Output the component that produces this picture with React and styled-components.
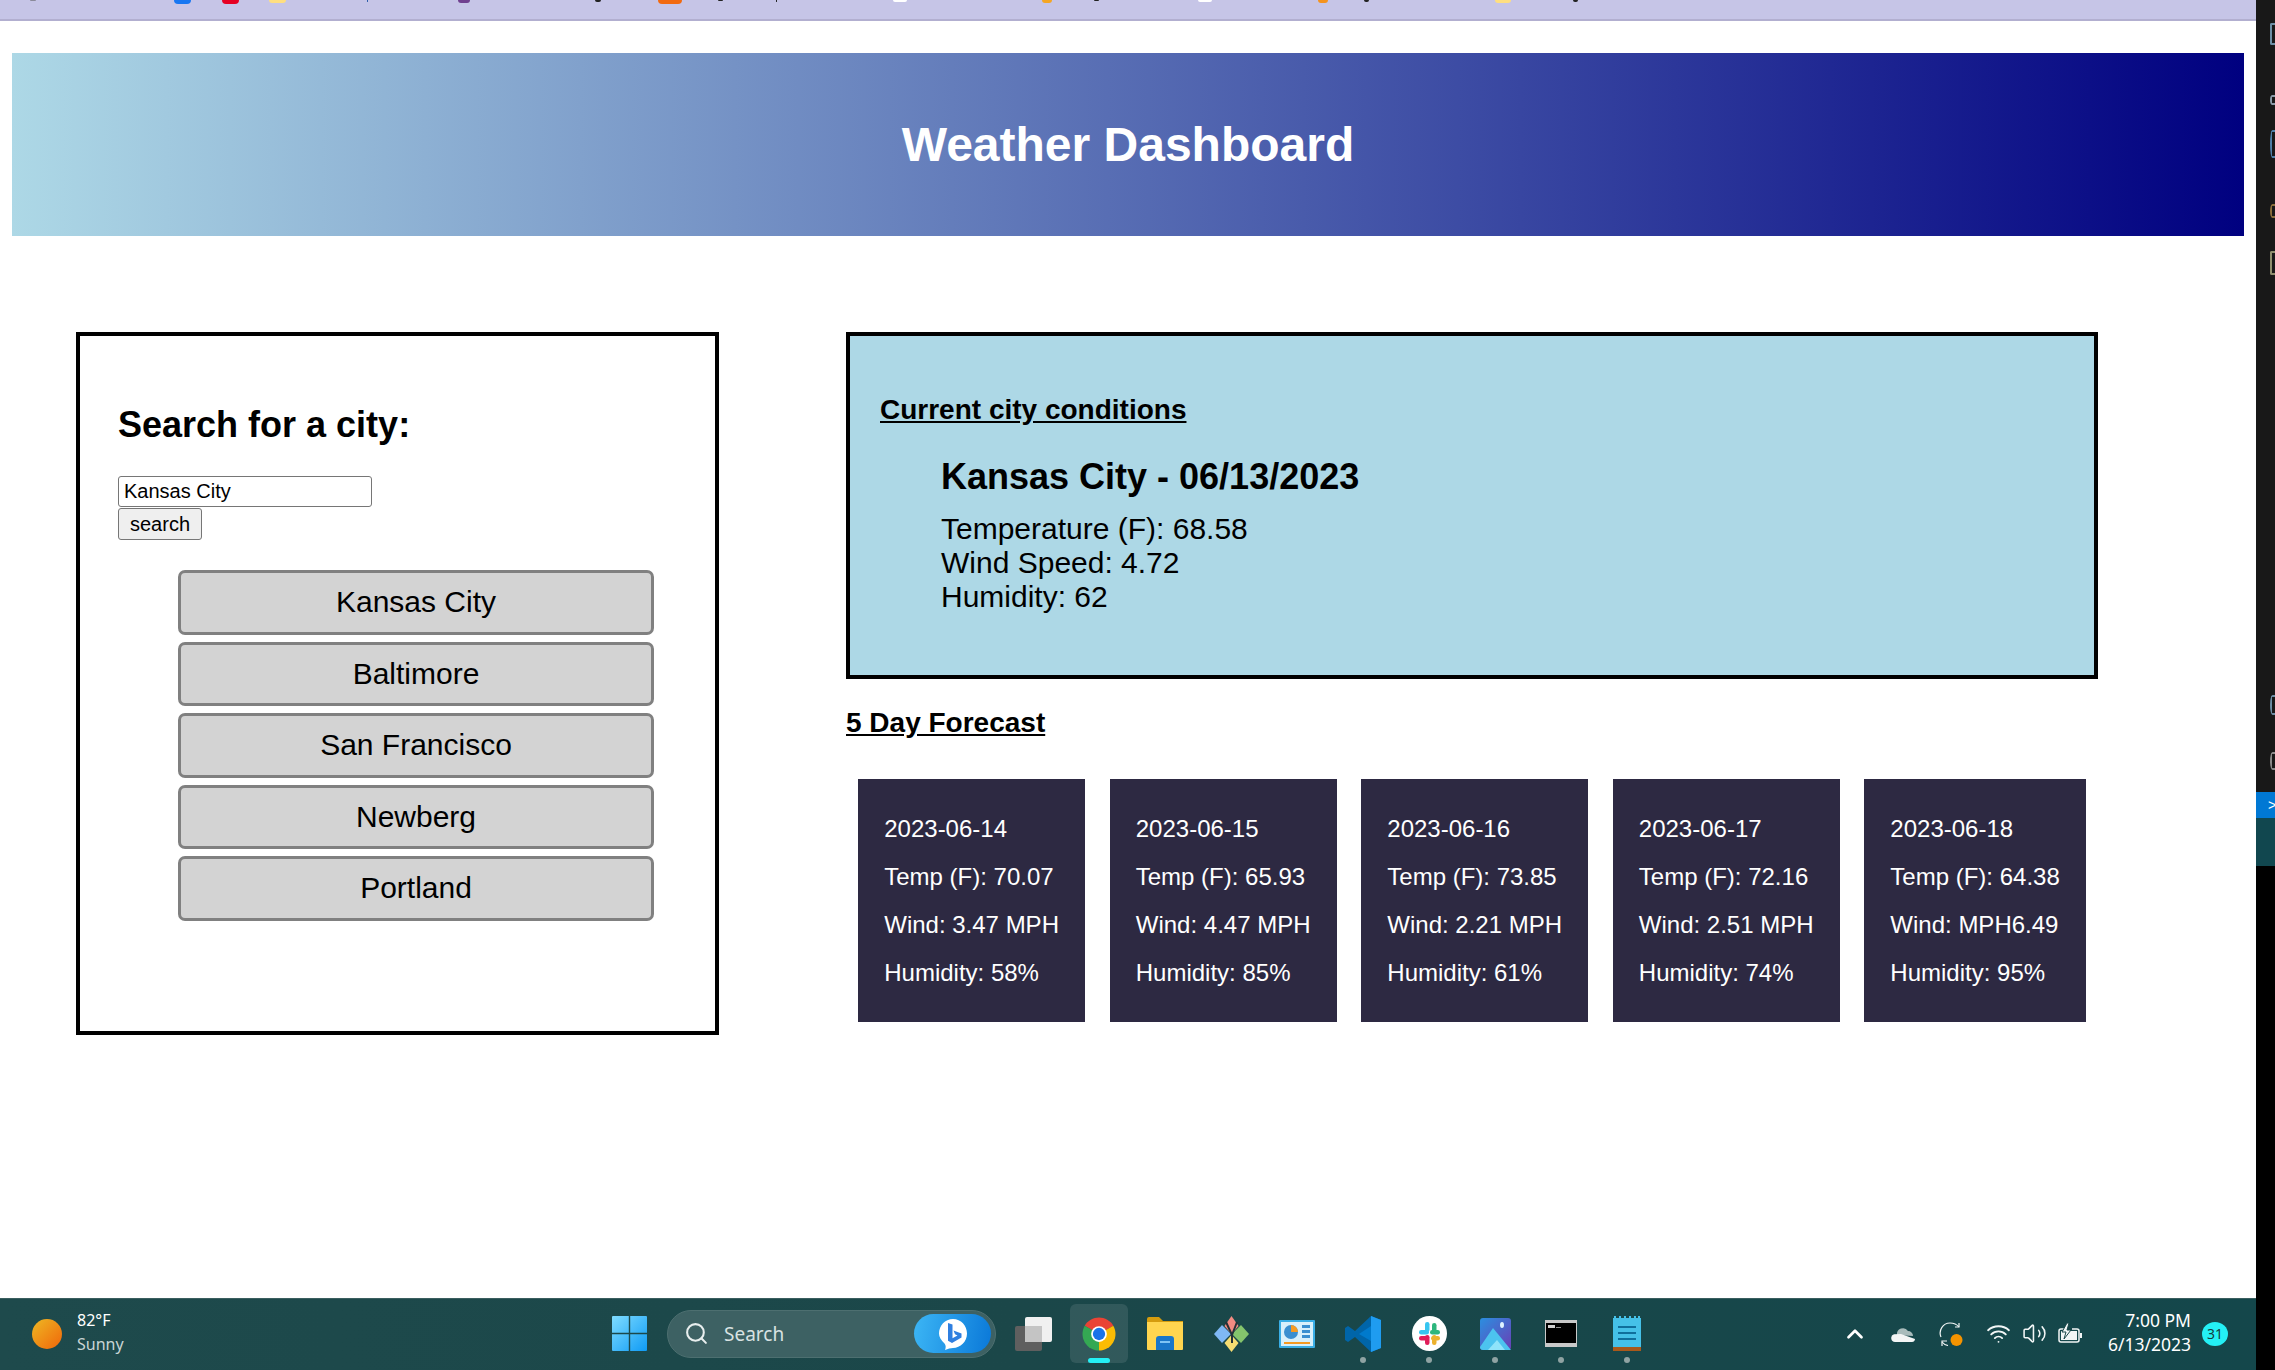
import styled, { createGlobalStyle } from "styled-components"
import { Search, ChevronUp, Wifi, Volume2 } from "lucide-react"

const cities = ["Kansas City", "Baltimore", "San Francisco", "Newberg", "Portland"]

const forecast = [
    { date: "2023-06-14", temp: "70.07", wind: "3.47 MPH", humidity: "58%" },
    { date: "2023-06-15", temp: "65.93", wind: "4.47 MPH", humidity: "85%" },
    { date: "2023-06-16", temp: "73.85", wind: "2.21 MPH", humidity: "61%" },
    { date: "2023-06-17", temp: "72.16", wind: "2.51 MPH", humidity: "74%" },
    { date: "2023-06-18", temp: "64.38", wind: "MPH6.49", humidity: "95%" },
]

// bits of the bookmark bar that stay visible at the top of the capture
const bookmarks = [
    { gap: 30, w: 6, h: 1, color: "#8a8a9a" },
    { gap: 138, w: 17, h: 4, color: "#1877f2" },
    { gap: 31, w: 17, h: 4, color: "#e60023" },
    { gap: 30, w: 17, h: 3, color: "#ffdf80" },
    { gap: 81, w: 1, h: 2, color: "#2a5caa" },
    { gap: 90, w: 12, h: 3, color: "#70408f" },
    { gap: 125, w: 6, h: 2, color: "#222222" },
    { gap: 57, w: 24, h: 4, color: "#f26a10" },
    { gap: 36, w: 5, h: 1, color: "#222222" },
    { gap: 53, w: 1, h: 2, color: "#222222" },
    { gap: 116, w: 14, h: 2, color: "#ffffff" },
    { gap: 135, w: 10, h: 3, color: "#f5a623" },
    { gap: 42, w: 5, h: 1, color: "#222222" },
    { gap: 99, w: 14, h: 2, color: "#ffffff" },
    { gap: 106, w: 10, h: 3, color: "#f5931e" },
    { gap: 36, w: 5, h: 2, color: "#222222" },
    { gap: 126, w: 16, h: 3, color: "#ffdf80" },
    { gap: 62, w: 5, h: 2, color: "#222222" },
]

const sideGlyphs = [
    { top: 23, h: 22, color: "#6d8ea5", square: true },
    { top: 50, h: 10, color: "#8a9aa8" },
    { top: 25, h: 28, color: "#4f7fa8" },
    { top: 46, h: 14, color: "#8a6d3b" },
    { top: 33, h: 24, color: "#8e8e6e", square: true },
    { top: 420, h: 20, color: "#6d8ea5" },
    { top: 37, h: 18, color: "#8a8a8a" },
]

function WindowsIcon() {
    return (
        <svg width="35" height="35" viewBox="0 0 35 35">
            <defs>
                <linearGradient id="win" x1="0" y1="0" x2="1" y2="1">
                    <stop offset="0" stopColor="#7fdcff" />
                    <stop offset="1" stopColor="#0f9bf5" />
                </linearGradient>
            </defs>
            <path fill="url(#win)" d="M1 0h15.8v16.8H0V1a1 1 0 0 1 1-1zM18.2 0H34a1 1 0 0 1 1 1v15.8H18.2zM0 18.2h16.8V35H1a1 1 0 0 1-1-1zM18.2 18.2H35V34a1 1 0 0 1-1 1H18.2z" />
        </svg>
    )
}

function BingIcon() {
    return (
        <svg width="30" height="32" viewBox="0 0 30 32">
            <path fill="#ffffff" d="M15 1c8 0 14 6.6 14 14.6C29 24 22.400 30 15 30c-2.500 0-5 .8-8 2 1-2.500 1-4.500-.5-6.500C3 22.500 1 19 1 15.600 1 7.600 7 1 15 1z" />
            <path fill="#2f7fe0" d="M10 5l4.500 1.600v13.600l5-2.800-2.500-1.200-1.500-3.600 8 2.800v4l-9.500 5.600L10 22.800z" />
        </svg>
    )
}

function TaskViewIcon() {
    return (
        <svg width="37" height="34" viewBox="0 0 37 34">
            <rect x="0" y="9" width="27" height="25" rx="2" fill="#5f5f5f" />
            <rect x="10" y="0" width="27" height="25" rx="2" fill="#f0f0f0" />
            <rect x="10" y="9" width="17" height="16" fill="#c4c4c4" />
        </svg>
    )
}

function ChromeIcon() {
    return (
        <svg width="36" height="36" viewBox="0 0 48 48">
            <path fill="#ea4335" d="M24 24L4.950 13A22 22 0 0 1 43.050 13Z" />
            <path fill="#fbbc04" d="M24 24L43.050 13A22 22 0 0 1 24 46Z" />
            <path fill="#34a853" d="M24 24L24 46A22 22 0 0 1 4.950 13Z" />
            <circle cx="24" cy="24" r="10.500" fill="#ffffff" />
            <circle cx="24" cy="24" r="8.200" fill="#1a73e8" />
        </svg>
    )
}

function FolderIcon() {
    return (
        <svg width="36" height="33" viewBox="0 0 36 33">
            <path fill="#d59c0e" d="M0 2a2 2 0 0 1 2-2h10l4 4h20v6H0z" />
            <path fill="#ffd54f" d="M0 5h36v27a1 1 0 0 1-1 1H1a1 1 0 0 1-1-1z" />
            <path fill="#1976c8" d="M9 33V22a3 3 0 0 1 3-3h12a3 3 0 0 1 3 3v11z" />
            <rect x="13" y="24" width="10" height="2" fill="#7ec4f5" />
        </svg>
    )
}

function DiamondIcon() {
    return (
        <svg width="35" height="36" viewBox="0 0 35 36">
            <path fill="#f28b82" d="M17.500 0l7 10-7 8-7-8z" />
            <path fill="#7fb8f5" d="M8 9l9 9-9 9-8-9z" />
            <path fill="#84c46c" d="M27 9l8 9-8 9-9-9z" />
            <path fill="#f7dd72" d="M17.500 19l7 8-7 9-7-9z" />
            <path fill="none" stroke="#263238" strokeWidth="2" d="M12 6l6 13 5-13M18 19v8" />
        </svg>
    )
}

function PanelIcon() {
    return (
        <svg width="36" height="28" viewBox="0 0 36 28">
            <rect width="36" height="28" rx="1" fill="#39aee6" />
            <rect x="2" y="2" width="32" height="24" fill="#d8f0fb" />
            <circle cx="12" cy="12" r="7" fill="#3a8fd0" />
            <path fill="#f59b23" d="M12 5a7 7 0 0 1 7 7h-7z" />
            <rect x="23" y="5" width="8" height="3" fill="#3a8fd0" />
            <rect x="23" y="10" width="8" height="3" fill="#3a8fd0" />
            <rect x="23" y="15" width="8" height="3" fill="#3a8fd0" />
            <rect x="5" y="22" width="26" height="2" fill="#f59b23" />
        </svg>
    )
}

function VsCodeIcon() {
    return (
        <svg width="36" height="36" viewBox="0 0 36 36">
            <path fill="#0065a9" d="M26 0L10 15 3 10 0 12v12l3 2 7-5 16 15z" />
            <path fill="#007acc" d="M26 0l10 4v28l-10 4V25L14 18l12-8z" />
            <path fill="#1f9cf0" d="M26 0l10 4v28l-10 4z" />
        </svg>
    )
}

function SlackIcon() {
    return (
        <svg width="35" height="35" viewBox="0 0 35 35">
            <circle cx="17.500" cy="17.500" r="17.500" fill="#ffffff" />
            <rect x="13" y="6" width="4.500" height="10" rx="2.200" fill="#36c5f0" />
            <rect x="7" y="14" width="10" height="4.500" rx="2.200" fill="#36c5f0" />
            <rect x="20" y="7" width="4.500" height="10" rx="2.200" fill="#2eb67d" />
            <rect x="18" y="14" width="10" height="4.500" rx="2.200" fill="#2eb67d" />
            <rect x="13" y="19" width="4.500" height="10" rx="2.200" fill="#e01e5a" />
            <rect x="7" y="20" width="9" height="4.500" rx="2.200" fill="#e01e5a" />
            <rect x="20" y="19" width="4.500" height="10" rx="2.200" fill="#ecb22e" />
            <rect x="19" y="20" width="9" height="4.500" rx="2.200" fill="#ecb22e" />
        </svg>
    )
}

function PhotosIcon() {
    return (
        <svg width="31" height="32" viewBox="0 0 31 32">
            <defs>
                <linearGradient id="photo" x1="0" y1="0" x2="1" y2="1">
                    <stop offset="0" stopColor="#2b8fe0" />
                    <stop offset="1" stopColor="#6a3fb5" />
                </linearGradient>
            </defs>
            <rect width="31" height="32" rx="3" fill="url(#photo)" />
            <ellipse cx="22" cy="7" rx="2" ry="3" fill="#dff3ff" />
            <path fill="#4cc3ef" d="M0 29L13 10l18 22H3a3 3 0 0 1-3-3z" />
            <path fill="#8fe3fa" d="M8 32l9-10 8 10z" />
        </svg>
    )
}

function TerminalIcon() {
    return (
        <svg width="32" height="27" viewBox="0 0 32 27">
            <rect width="32" height="27" fill="#c9c9c9" />
            <rect x="1" y="3" width="30" height="20" fill="#000000" />
            <rect x="3" y="5" width="7" height="3" fill="#d0d0d0" />
            <rect x="11" y="7" width="5" height="1" fill="#909090" />
        </svg>
    )
}

function NotepadIcon() {
    return (
        <svg width="28" height="35" viewBox="0 0 28 35">
            <rect y="2" width="28" height="29" fill="#45c1e8" />
            <rect y="31" width="28" height="4" fill="#a9591b" />
            <rect x="5" y="10" width="18" height="2" fill="#0f6f9c" />
            <rect x="5" y="16" width="18" height="2" fill="#0f6f9c" />
            <rect x="5" y="22" width="18" height="2" fill="#0f6f9c" />
            <path fill="#45c1e8" d="M1 0h2v3H1zM6 0h2v3H6zM11 0h2v3h-2zM16 0h2v3h-2zM21 0h2v3h-2zM25 0h2v3h-2z" />
        </svg>
    )
}

function CloudIcon() {
    return (
        <svg width="24" height="16" viewBox="0 0 24 16">
            <path fill="#a9bcbc" d="M6 9a6 6 0 0 1 11-4 5 5 0 0 1 5 5z" />
            <path fill="#f4f6f6" d="M4 16a4 4 0 0 1-1-7.800L10 8l14 5c0 1.500-1 3-3 3z" />
        </svg>
    )
}

function SyncIcon() {
    return (
        <svg width="24" height="24" viewBox="0 0 24 24" fill="none" stroke="#f2f6f6" strokeWidth="1.200">
            <path d="M2 15A10 10 0 0 1 11 1c4 0 7 1.500 9 4" />
            <path d="M20 1v4h-4" />
            <path d="M3 24v-5h5" />
            <path d="M3 20c1.500 2 3.500 3 6 3.500" />
            <ellipse cx="17.500" cy="18" rx="6" ry="6" fill="#f59300" stroke="none" />
        </svg>
    )
}

function BatteryIcon() {
    return (
        <svg width="24" height="21" viewBox="0 0 24 21" fill="none" stroke="#f2f6f6" strokeWidth="1.500">
            <path d="M9 6H3a2 2 0 0 0-2 2v9a2 2 0 0 0 2 2h16a2 2 0 0 0 2-2V8a2 2 0 0 0-2-2h-5" />
            <rect x="3" y="8" width="16" height="9" fill="#f2f6f6" stroke="none" />
            <path fill="#f2f6f6" stroke="#1a4749" strokeWidth="1" d="M9 0L4 9h4l-2 7 7-9H9l2-7z" />
            <rect x="22" y="10" width="2" height="5" fill="#f2f6f6" stroke="none" />
        </svg>
    )
}

const apps = [
    { icon: <TaskViewIcon /> },
    { icon: <ChromeIcon />, active: true },
    { icon: <FolderIcon /> },
    { icon: <DiamondIcon /> },
    { icon: <PanelIcon /> },
    { icon: <VsCodeIcon />, open: true },
    { icon: <SlackIcon />, open: true },
    { icon: <PhotosIcon />, open: true },
    { icon: <TerminalIcon />, open: true },
    { icon: <NotepadIcon />, open: true },
]

export default function App() {
    return (
        <>
            <GlobalStyle />
            <Screen>
                <Browser>
                    <TopBar>
                        {bookmarks.map((b, i) => (
                            <BookmarkBit key={i} $gap={b.gap} $w={b.w} $h={b.h} $color={b.color} />
                        ))}
                    </TopBar>
                    <Page>
                        <Banner>
                            <h1>Weather Dashboard</h1>
                        </Banner>
                        <Columns>
                            <SearchCard>
                                <SearchTitle>Search for a city:</SearchTitle>
                                <SearchForm>
                                    <CityInput defaultValue="Kansas City" />
                                    <SearchButton type="button">search</SearchButton>
                                </SearchForm>
                                <CityList>
                                    {cities.map((city) => (
                                        <CityButton key={city} type="button">{city}</CityButton>
                                    ))}
                                </CityList>
                            </SearchCard>
                            <Results>
                                <CurrentCard>
                                    <SectionTitle>Current city conditions</SectionTitle>
                                    <CurrentBody>
                                        <CurrentCity>Kansas City - 06/13/2023</CurrentCity>
                                        <CurrentLine>Temperature (F): 68.58</CurrentLine>
                                        <CurrentLine>Wind Speed: 4.72</CurrentLine>
                                        <CurrentLine>Humidity: 62</CurrentLine>
                                    </CurrentBody>
                                </CurrentCard>
                                <ForecastTitle>5 Day Forecast</ForecastTitle>
                                <ForecastRow>
                                    {forecast.map((day) => (
                                        <DayCard key={day.date}>
                                            <DayLine>{day.date}</DayLine>
                                            <DayLine>Temp (F): {day.temp}</DayLine>
                                            <DayLine>Wind: {day.wind}</DayLine>
                                            <DayLine>Humidity: {day.humidity}</DayLine>
                                        </DayCard>
                                    ))}
                                </ForecastRow>
                            </Results>
                        </Columns>
                    </Page>
                    <Taskbar>
                        <WeatherWidget>
                            <Sun />
                            <WeatherText>
                                <span>82°F</span>
                                <small>Sunny</small>
                            </WeatherText>
                        </WeatherWidget>
                        <TaskCenter>
                            <WindowsIcon />
                            <SearchPill>
                                <Search size={25} color="#e8eeee" strokeWidth={2} />
                                <span>Search</span>
                                <BingButton><BingIcon /></BingButton>
                            </SearchPill>
                            <Apps>
                                {apps.map((app, i) => (
                                    <AppSlot key={i} $active={app.active}>
                                        {app.icon}
                                        {app.active && <ActiveMark />}
                                        {app.open && <OpenDot />}
                                    </AppSlot>
                                ))}
                            </Apps>
                        </TaskCenter>
                        <Tray>
                            <TrayChevron size={26} color="#ffffff" strokeWidth={2.500} />
                            <CloudIcon />
                            <SyncIcon />
                            <TrayIcons>
                                <Wifi size={25} color="#f2f6f6" strokeWidth={1.800} />
                                <Volume2 size={25} color="#f2f6f6" strokeWidth={1.500} />
                                <BatteryIcon />
                            </TrayIcons>
                            <Clock>
                                <span>7:00 PM</span>
                                <span>6/13/2023</span>
                            </Clock>
                            <Badge>31</Badge>
                        </Tray>
                    </Taskbar>
                </Browser>
                <SidePanel>
                    <SideDark>
                        {sideGlyphs.map((g, i) => (
                            <SideGlyph key={i} $top={g.top} $h={g.h} $color={g.color} $square={g.square} />
                        ))}
                    </SideDark>
                    <SideBlue>&gt;</SideBlue>
                    <SideTeal />
                </SidePanel>
            </Screen>
        </>
    )
}

const GlobalStyle = createGlobalStyle`
    * {
        box-sizing: border-box;
    }
    body {
        margin: 0;
        background: #ffffff;
        font-family: "Liberation Sans", Arial, sans-serif;
        overflow: hidden;
    }
    h1, h2, h3, p {
        margin: 0;
    }
`

const Screen = styled.div`
    width: 2275px;
    height: 1370px;
    display: flex;
`

const Browser = styled.div`
    width: 2256px;
    display: flex;
    flex-direction: column;
`

const TopBar = styled.div`
    height: 21px;
    flex: none;
    display: flex;
    align-items: flex-start;
    background: #c6c5e7;
    border-bottom: 2px solid #b2afd0;
`

const BookmarkBit = styled.i`
    flex: none;
    margin-left: ${(p) => p.$gap}px;
    width: ${(p) => p.$w}px;
    height: ${(p) => p.$h}px;
    background: ${(p) => p.$color};
    border-radius: 0 0 ${(p) => p.$w / 2}px ${(p) => p.$w / 2}px;
`

const Page = styled.main`
    flex: 1;
    padding: 32px 12px 0;
`

const Banner = styled.header`
    height: 183px;
    display: flex;
    align-items: center;
    justify-content: center;
    background: linear-gradient(to right, #add8e6, #000080);
    h1 {
        font-size: 48px;
        font-weight: 700;
        color: #ffffff;
    }
`

const Columns = styled.div`
    margin: 96px 0 0 64px;
    display: flex;
    align-items: flex-start;
    gap: 127px;
`

const SearchCard = styled.section`
    width: 643px;
    height: 703px;
    flex: none;
    padding: 68px 38px 0;
    border: 4px solid #000000;
`

const SearchTitle = styled.h2`
    font-size: 36px;
    font-weight: 700;
`

const SearchForm = styled.form`
    margin-top: 30px;
    display: flex;
    flex-direction: column;
    align-items: flex-start;
    gap: 1px;
`

const CityInput = styled.input`
    width: 254px;
    height: 31px;
    padding: 0 5px;
    font-family: "Liberation Sans", Arial, sans-serif;
    font-size: 20px;
    color: #000000;
    background: #ffffff;
    border: 1px solid #767676;
    border-radius: 3px;
`

const SearchButton = styled.button`
    width: 84px;
    height: 32px;
    padding: 0;
    font-family: "Liberation Sans", Arial, sans-serif;
    font-size: 20px;
    color: #000000;
    background: #efefef;
    border: 1px solid #767676;
    border-radius: 3px;
`

const CityList = styled.div`
    width: 476px;
    margin: 30px 0 0 60px;
    display: flex;
    flex-direction: column;
    gap: 7px;
`

const CityButton = styled.button`
    height: 64.500px;
    padding: 0;
    font-family: "Liberation Sans", Arial, sans-serif;
    font-size: 30px;
    color: #000000;
    background: #d3d3d3;
    border: 3px solid #808080;
    border-radius: 7px;
`

const Results = styled.div`
    width: 1252px;
    flex: none;
`

const CurrentCard = styled.section`
    height: 347px;
    padding: 58px 30px 0;
    background: #add8e6;
    border: 4px solid #000000;
`

const SectionTitle = styled.h3`
    font-size: 28px;
    font-weight: 700;
    text-decoration: underline;
`

const CurrentBody = styled.div`
    margin: 30px 0 0 61px;
`

const CurrentCity = styled.h2`
    margin-bottom: 14px;
    font-size: 36px;
    font-weight: 700;
`

const CurrentLine = styled.p`
    font-size: 30px;
`

const ForecastTitle = styled(SectionTitle)`
    margin-top: 28px;
`

const ForecastRow = styled.div`
    margin-top: 40px;
    display: flex;
    justify-content: center;
    gap: 24.800px;
`

const DayCard = styled.article`
    flex: none;
    width: fit-content;
    height: 243px;
    padding: 26px 26px 25px;
    background: #2d2942;
    color: #ffffff;
`

const DayLine = styled.p`
    font-size: 24px;
    line-height: 48px;
    white-space: nowrap;
`

const Taskbar = styled.footer`
    height: 72px;
    flex: none;
    padding-bottom: 2px;
    display: grid;
    grid-template-columns: 1fr;
    grid-template-rows: 1fr;
    align-items: center;
    background: linear-gradient(to right, #1e4a4c, #1b4749 45%, #14474b);
    border-top: 1px solid #3a5e5f;
    color: #ffffff;
    font-family: "Noto Sans", "Open Sans", sans-serif;
    > * {
        grid-area: 1 / 1;
    }
`

const WeatherWidget = styled.div`
    justify-self: start;
    display: flex;
    align-items: center;
    gap: 15px;
    padding-left: 32px;
`

const Sun = styled.div`
    width: 30px;
    height: 30px;
    border-radius: 50%;
    background: linear-gradient(135deg, #eeb823, #f0660a);
`

const WeatherText = styled.div`
    display: flex;
    flex-direction: column;
    margin-bottom: 3px;
    line-height: 24px;
    font-size: 16px;
    small {
        font-size: 16px;
        color: #c8d5d5;
    }
`

const TaskCenter = styled.div`
    justify-self: start;
    display: flex;
    align-items: center;
    margin-left: 612px;
`

const SearchPill = styled.div`
    width: 329px;
    height: 48px;
    margin: 0 4px 0 20px;
    padding: 0 4px 0 16px;
    display: flex;
    align-items: center;
    gap: 15px;
    background: #3d6163;
    border: 1px solid #4d6f70;
    border-radius: 24px;
    font-size: 19px;
    color: #d8e2e2;
`

const BingButton = styled.div`
    width: 77px;
    height: 39px;
    margin-left: auto;
    display: flex;
    align-items: center;
    justify-content: center;
    background: linear-gradient(100deg, #3cb6f5, #0a78d8);
    border-radius: 20px;
`

const Apps = styled.div`
    display: flex;
`

const AppSlot = styled.div`
    position: relative;
    width: ${(p) => (p.$active ? "58px" : "66px")};
    height: 59px;
    margin: ${(p) => (p.$active ? "0 4px" : "0")};
    display: flex;
    align-items: center;
    justify-content: center;
    border-radius: 6px;
    background: ${(p) => (p.$active ? "rgba(255, 255, 255, 0.1)" : "transparent")};
`

const ActiveMark = styled.i`
    position: absolute;
    bottom: 0;
    left: 18px;
    width: 22px;
    height: 5px;
    background: #24f0f5;
    border-radius: 3px;
`

const OpenDot = styled.i`
    position: absolute;
    bottom: 0;
    left: 30px;
    width: 6px;
    height: 6px;
    background: #8fa3a3;
    border-radius: 50%;
`

const Tray = styled.div`
    justify-self: end;
    margin-right: 28px;
    display: flex;
    align-items: center;
    gap: 24px;
`

const TrayChevron = styled(ChevronUp)`
    margin-right: -1px;
`

const TrayIcons = styled.div`
    margin-left: -1.500px;
    display: flex;
    align-items: center;
    gap: 11.250px;
`

const Clock = styled.div`
    display: flex;
    flex-direction: column;
    align-items: flex-end;
    margin: 0 0 3px 1.500px;
    font-size: 17.500px;
    line-height: 24px;
`

const Badge = styled.div`
    width: 26px;
    height: 24px;
    margin-left: -13px;
    display: flex;
    align-items: center;
    justify-content: center;
    background: #24f0f5;
    border-radius: 50%;
    color: #143c40;
    font-size: 14px;
`

const SidePanel = styled.aside`
    width: 19px;
    flex: none;
    display: flex;
    flex-direction: column;
    background: #000000;
`

const SideDark = styled.div`
    height: 792px;
    padding-left: 14px;
    display: flex;
    flex-direction: column;
    align-items: flex-start;
    background: #181818;
`

const SideGlyph = styled.i`
    width: 5px;
    margin-top: ${(p) => p.$top}px;
    height: ${(p) => p.$h}px;
    border: 2px solid ${(p) => p.$color};
    border-right: none;
    border-radius: ${(p) => (p.$square ? "2px 0 0 2px" : "50% 0 0 50%")};
`

const SideBlue = styled.div`
    height: 26px;
    padding-left: 12px;
    background: #0078d4;
    color: #ffffff;
    font-size: 14px;
    line-height: 26px;
`

const SideTeal = styled.div`
    height: 48px;
    background: #11474f;
`
